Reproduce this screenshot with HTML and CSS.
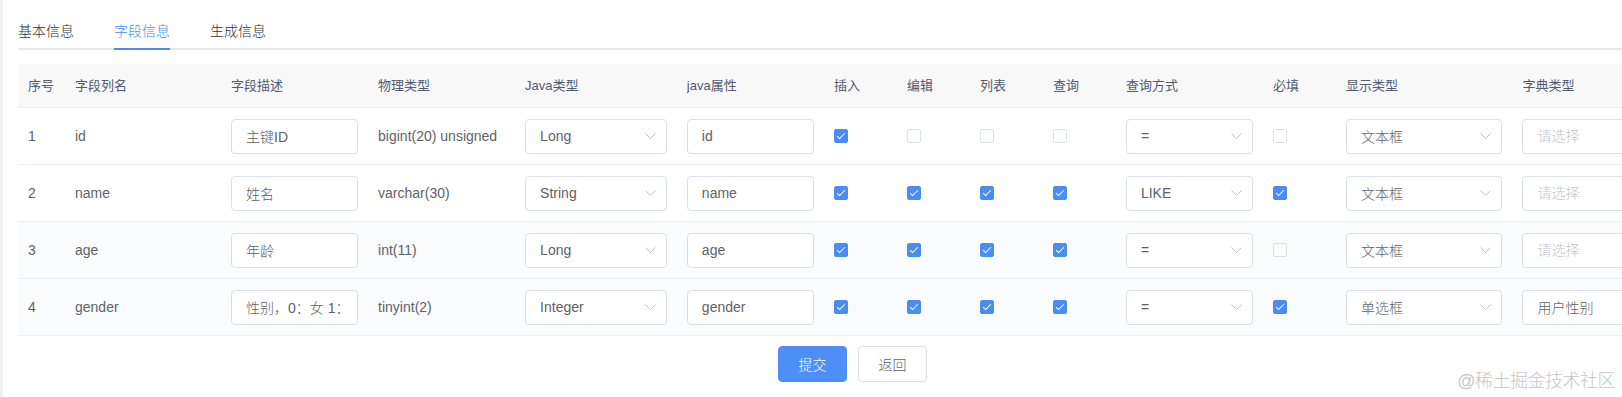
FILE: index.html
```html
<!DOCTYPE html>
<html lang="zh-CN">
<head>
  <meta charset="UTF-8">
  <title>修改生成配置</title>
  <link rel="stylesheet" href="styles.css">
</head>
<body>
  <div class="page">

    <div class="tabs">
      <div class="tab">基本信息</div>
      <div class="tab active">字段信息</div>
      <div class="tab">生成信息</div>
    </div>

    <table class="columns">
      <colgroup>
        <col class="w-idx">
        <col class="w-name">
        <col class="w-desc">
        <col class="w-type">
        <col class="w-java">
        <col class="w-prop">
        <col class="w-chk">
        <col class="w-chk">
        <col class="w-chk">
        <col class="w-chk">
        <col class="w-query">
        <col class="w-chk">
        <col class="w-html">
        <col class="w-dict">
      </colgroup>
      <thead>
        <tr>
          <th><div class="cell">序号</div></th>
          <th><div class="cell">字段列名</div></th>
          <th><div class="cell">字段描述</div></th>
          <th><div class="cell">物理类型</div></th>
          <th><div class="cell">Java类型</div></th>
          <th><div class="cell">java属性</div></th>
          <th><div class="cell">插入</div></th>
          <th><div class="cell">编辑</div></th>
          <th><div class="cell">列表</div></th>
          <th><div class="cell">查询</div></th>
          <th><div class="cell">查询方式</div></th>
          <th><div class="cell">必填</div></th>
          <th><div class="cell">显示类型</div></th>
          <th><div class="cell">字典类型</div></th>
        </tr>
      </thead>
      <tbody>
        <tr>
          <td><div class="cell">1</div></td>
          <td><div class="cell">id</div></td>
          <td><div class="cell"><input class="field" value="主键ID"></div></td>
          <td><div class="cell">bigint(20) unsigned</div></td>
          <td><div class="cell"><div class="select"><input class="field" readonly value="Long"><svg viewBox="0 0 11 6"><path d="M0.5 0.5L5.5 5.5L10.5 0.5"/></svg></div></div></td>
          <td><div class="cell"><input class="field" value="id"></div></td>
          <td><div class="cell"><span class="check on"></span></div></td>
          <td><div class="cell"><span class="check"></span></div></td>
          <td><div class="cell"><span class="check"></span></div></td>
          <td><div class="cell"><span class="check"></span></div></td>
          <td><div class="cell"><div class="select"><input class="field" readonly value="="><svg viewBox="0 0 11 6"><path d="M0.5 0.5L5.5 5.5L10.5 0.5"/></svg></div></div></td>
          <td><div class="cell"><span class="check"></span></div></td>
          <td><div class="cell"><div class="select"><input class="field" readonly value="文本框"><svg viewBox="0 0 11 6"><path d="M0.5 0.5L5.5 5.5L10.5 0.5"/></svg></div></div></td>
          <td><div class="cell"><div class="select"><input class="field" readonly placeholder="请选择"></div></div></td>
        </tr>
        <tr>
          <td><div class="cell">2</div></td>
          <td><div class="cell">name</div></td>
          <td><div class="cell"><input class="field" value="姓名"></div></td>
          <td><div class="cell">varchar(30)</div></td>
          <td><div class="cell"><div class="select"><input class="field" readonly value="String"><svg viewBox="0 0 11 6"><path d="M0.5 0.5L5.5 5.5L10.5 0.5"/></svg></div></div></td>
          <td><div class="cell"><input class="field" value="name"></div></td>
          <td><div class="cell"><span class="check on"></span></div></td>
          <td><div class="cell"><span class="check on"></span></div></td>
          <td><div class="cell"><span class="check on"></span></div></td>
          <td><div class="cell"><span class="check on"></span></div></td>
          <td><div class="cell"><div class="select"><input class="field" readonly value="LIKE"><svg viewBox="0 0 11 6"><path d="M0.5 0.5L5.5 5.5L10.5 0.5"/></svg></div></div></td>
          <td><div class="cell"><span class="check on"></span></div></td>
          <td><div class="cell"><div class="select"><input class="field" readonly value="文本框"><svg viewBox="0 0 11 6"><path d="M0.5 0.5L5.5 5.5L10.5 0.5"/></svg></div></div></td>
          <td><div class="cell"><div class="select"><input class="field" readonly placeholder="请选择"></div></div></td>
        </tr>
        <tr class="tinted">
          <td><div class="cell">3</div></td>
          <td><div class="cell">age</div></td>
          <td><div class="cell"><input class="field" value="年龄"></div></td>
          <td><div class="cell">int(11)</div></td>
          <td><div class="cell"><div class="select"><input class="field" readonly value="Long"><svg viewBox="0 0 11 6"><path d="M0.5 0.5L5.5 5.5L10.5 0.5"/></svg></div></div></td>
          <td><div class="cell"><input class="field" value="age"></div></td>
          <td><div class="cell"><span class="check on"></span></div></td>
          <td><div class="cell"><span class="check on"></span></div></td>
          <td><div class="cell"><span class="check on"></span></div></td>
          <td><div class="cell"><span class="check on"></span></div></td>
          <td><div class="cell"><div class="select"><input class="field" readonly value="="><svg viewBox="0 0 11 6"><path d="M0.5 0.5L5.5 5.5L10.5 0.5"/></svg></div></div></td>
          <td><div class="cell"><span class="check"></span></div></td>
          <td><div class="cell"><div class="select"><input class="field" readonly value="文本框"><svg viewBox="0 0 11 6"><path d="M0.5 0.5L5.5 5.5L10.5 0.5"/></svg></div></div></td>
          <td><div class="cell"><div class="select"><input class="field" readonly placeholder="请选择"></div></div></td>
        </tr>
        <tr class="tinted">
          <td><div class="cell">4</div></td>
          <td><div class="cell">gender</div></td>
          <td><div class="cell"><input class="field" value="性别，0：女 1：男 2：未知"></div></td>
          <td><div class="cell">tinyint(2)</div></td>
          <td><div class="cell"><div class="select"><input class="field" readonly value="Integer"><svg viewBox="0 0 11 6"><path d="M0.5 0.5L5.5 5.5L10.5 0.5"/></svg></div></div></td>
          <td><div class="cell"><input class="field" value="gender"></div></td>
          <td><div class="cell"><span class="check on"></span></div></td>
          <td><div class="cell"><span class="check on"></span></div></td>
          <td><div class="cell"><span class="check on"></span></div></td>
          <td><div class="cell"><span class="check on"></span></div></td>
          <td><div class="cell"><div class="select"><input class="field" readonly value="="><svg viewBox="0 0 11 6"><path d="M0.5 0.5L5.5 5.5L10.5 0.5"/></svg></div></div></td>
          <td><div class="cell"><span class="check on"></span></div></td>
          <td><div class="cell"><div class="select"><input class="field" readonly value="单选框"><svg viewBox="0 0 11 6"><path d="M0.5 0.5L5.5 5.5L10.5 0.5"/></svg></div></div></td>
          <td><div class="cell"><div class="select"><input class="field" readonly value="用户性别"></div></div></td>
        </tr>
      </tbody>
    </table>

    <div class="footer">
      <button class="btn primary">提交</button>
      <button class="btn">返回</button>
    </div>

    <div class="mark">@稀土掘金技术社区</div>
  </div>
</body>
</html>
```

FILE: styles.css
```css
* {
  box-sizing: border-box;
}

html,
body {
  margin: 0;
}

body {
  height: 397px;
  overflow: hidden;
  font-family: 'Liberation Sans', 'Noto Sans CJK SC', sans-serif;
  font-size: 14px;
  font-weight: 300;
  color: #606266;
  background: #fff;
  box-shadow: inset 3px 0 0 #f0f1f3;
}

.page {
  padding: 8px 0 0 18px;
  width: 1700px;
  height: 397px;
}

/* tabs */
.tabs {
  display: flex;
  width: 1671px;
  height: 42px;
  border-bottom: 2px solid #e4e7ed;
  margin-bottom: 14px;
}

.tab {
  height: 42px;
  margin-bottom: -2px;
  padding: 6px 20px 0;
  line-height: 34px;
  color: #303133;
  border-bottom: 2px solid transparent;
}

.tab:first-child {
  padding-left: 0;
}

.tab.active {
  color: #4a8cf2;
  border-image: linear-gradient(to right, transparent 20px, #4a8cf2 20px, #4a8cf2 calc(100% - 20px), transparent calc(100% - 20px)) 0 0 1 0 / 0 0 2px 0;
}

/* table */
.columns {
  table-layout: fixed;
  width: 1671px;
  border-collapse: separate;
  border-spacing: 0;
}

.w-idx { width: 47px; }
.w-name { width: 156px; }
.w-desc { width: 147px; }
.w-type { width: 147px; }
.w-java { width: 161.7px; }
.w-prop { width: 147px; }
.w-chk { width: 73px; }
.w-query { width: 147px; }
.w-html { width: 176.4px; }
.w-dict { width: 176.4px; }

.columns th,
.columns td {
  padding: 0 10px;
  text-align: left;
  border-bottom: 1px solid #ebeef5;
  white-space: nowrap;
}

.columns th {
  background: #f8f8f9;
  color: #515a6e;
  font-size: 13px;
  font-weight: normal;
}

.columns th .cell {
  height: 43px;
}

.cell {
  display: flex;
  align-items: center;
  height: 56px;
  line-height: 20px;
  overflow: hidden;
}

.tinted td {
  background: #fafbfc;
}

/* inputs */
.field {
  display: block;
  width: 100%;
  height: 35px;
  padding: 0 14px;
  border: 1px solid #dcdfe6;
  border-radius: 4px;
  background: #fff;
  font-family: inherit;
  font-size: 14px;
  font-weight: 300;
  color: #606266;
  outline: none;
}

.field::placeholder {
  color: #c0c4cc;
}

.select {
  position: relative;
  width: 100%;
}

.select .field {
  padding-right: 30px;
  cursor: pointer;
}

.select svg {
  position: absolute;
  right: 11px;
  top: 50%;
  width: 11px;
  height: 6px;
  margin-top: -3px;
  fill: none;
  stroke: #c0c4cc;
  stroke-width: 1;
}

/* checkbox */
.check {
  position: relative;
  display: inline-block;
  width: 14px;
  height: 14px;
  border: 1px solid #dcdfe6;
  border-radius: 2px;
  background: #fff;
}

.check.on {
  background: #4a8cf2;
  border-color: #4a8cf2;
}

.check.on::after {
  content: '';
  position: absolute;
  left: 4px;
  top: 1px;
  width: 3px;
  height: 7px;
  border: 1px solid #fff;
  border-left: 0;
  border-top: 0;
  transform: rotate(45deg);
}

/* footer */
.footer {
  display: flex;
  gap: 11px;
  padding-left: 760px;
  margin-top: 10px;
}

.btn {
  width: 69px;
  height: 36px;
  padding: 0;
  border: 1px solid #dcdfe6;
  border-radius: 4px;
  background: #fff;
  font-family: inherit;
  font-size: 14px;
  font-weight: 300;
  color: #606266;
  cursor: pointer;
}

.btn.primary {
  background: #4d8ff6;
  border-color: #4d8ff6;
  color: #fff;
}

.mark {
  position: absolute;
  right: 7px;
  bottom: 3px;
  font-size: 18px;
  line-height: 26px;
  color: #c6c6c6;
  letter-spacing: -0.5px;
}
```
